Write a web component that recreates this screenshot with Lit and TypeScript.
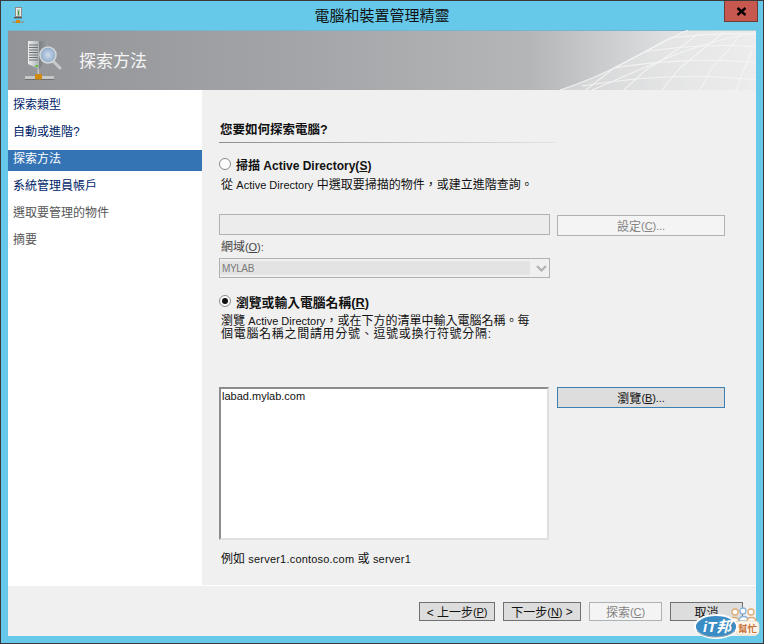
import { LitElement, html, css, svg } from "lit";
import { customElement } from "lit/decorators.js";

const smallIcon = svg`<svg class="tb-icon" width="13" height="17" viewBox="0 0 13 17">
  <rect x="3.500" y="0.500" width="6" height="9" fill="#eef0ee" stroke="#8d8d8d"/>
  <rect x="5" y="2" width="3" height="7" fill="#b9c8b9"/><rect x="6" y="4" width="1" height="4" fill="#35a035"/>
  <rect x="2" y="10" width="8" height="1.400" fill="#55595c"/>
  <rect x="0" y="14.500" width="12" height="1.200" fill="#8d8d84"/><rect x="4" y="13" width="4" height="3" fill="#d08a0c"/>
</svg>`;

const headIcon = svg`<svg class="head-icon" width="38" height="44" viewBox="0 0 38 44">
  <defs>
    <linearGradient id="srv" x1="0" x2="1"><stop offset="0" stop-color="#eceeee"/><stop offset="1" stop-color="#aeb2b4"/></linearGradient>
    <linearGradient id="sd" x1="0" x2="1"><stop offset="0" stop-color="#7d8184"/><stop offset="1" stop-color="#9b9ea1"/></linearGradient>
    <radialGradient id="gl"><stop offset="0" stop-color="#cfdcea"/><stop offset="1" stop-color="#8aa8c8"/></radialGradient>
  </defs>
  <path d="M3 3 L14 3 L14 31 L3 26 Z" fill="url(#srv)"/>
  <path d="M14 3 L23 3 L23 20 L14 31 Z" fill="url(#sd)"/>
  <g stroke="#6c7276" stroke-width="1"><path d="M4 7h9M4 9.500h9M4 12h9M4 14.500h9M4 17h9M4 19.500h9M4 22h9"/></g>
  <rect x="10.500" y="27" width="2.500" height="2" fill="#58c030"/>
  <rect x="12.500" y="31" width="1.600" height="6" fill="#c4c6c8"/>
  <path d="M28 23 L35 30" stroke="#c8cacb" stroke-width="3" stroke-linecap="round"/>
  <circle cx="23" cy="17" r="8" fill="url(#gl)" stroke="#d2d6d8" stroke-width="1.600"/>
  <rect x="0" y="38" width="29" height="3" fill="#c6c8c8"/><rect x="0" y="41" width="29" height="1" fill="#6d6f70"/>
  <rect x="10" y="36" width="7" height="5.500" rx="1" fill="#d08a0c"/>
</svg>`;

const mesh = svg`<svg class="mesh" width="204" height="60" viewBox="0 0 204 60" fill="none">
  <path d="M8 60 C60 44 100 16 136 0 L204 0 L204 60 Z" fill="#ebecec" opacity="0.45"/>
  <g stroke="#f7f7f8" stroke-width="1.100" opacity="0.85">
    <path d="M8 60 C60 44 100 16 136 0"/>
    <path d="M40 60 C90 40 140 12 204 3"/>
    <path d="M30 56 C90 46 150 44 204 50"/>
    <path d="M62 38 C110 30 165 28 204 33"/>
    <path d="M92 22 C130 16 170 14 204 17"/>
    <path d="M118 8 C150 4 180 3 204 4"/>
    <path d="M34 60 L62 38 L92 22 L118 8"/>
    <path d="M72 60 L94 40 L122 22 L146 4"/>
    <path d="M110 60 L128 38 L150 20 L172 2"/>
    <path d="M148 60 L160 38 L178 18 L190 2"/>
    <path d="M184 60 L192 40 L200 20"/>
  </g>
</svg>`;

const badge = svg`<svg class="badge" width="68" height="34" viewBox="0 0 68 34">
  <g fill="#ffffff" stroke-width="1.300">
    <circle cx="42" cy="6" r="3" stroke="#e0ab72"/><circle cx="50" cy="5" r="3" stroke="#8ab4d8"/><circle cx="58" cy="6" r="3" stroke="#e0ab72"/>
    <path d="M37 16 C37 10 46 10 46 16Z" stroke="#e0ab72"/><path d="M46 15 C46 9 55 9 55 15Z" stroke="#8ab4d8"/><path d="M54 16 C54 10 63 10 63 16Z" stroke="#e0ab72"/>
  </g>
  <rect x="43" y="15" width="23" height="14" rx="4" fill="#fdf6ec" stroke="#e8d8c0" stroke-width="0.800"/>
  <ellipse cx="23" cy="20.500" rx="21" ry="11.500" fill="#3a8cc4" stroke="#ffffff" stroke-width="1.800"/>
  <path d="M4 25 C10 33 34 33 42 25" stroke="#9aa4aa" stroke-width="1" fill="none"/>
  <text x="10" y="26" font-family="Liberation Sans, Noto Sans CJK TC, sans-serif" font-size="15" font-weight="700" font-style="italic" fill="#ffffff">iT邦</text>
  <text x="45" y="26" font-family="Noto Sans CJK TC, sans-serif" font-size="9.500" font-weight="700" fill="#c8743a">幫忙</text>
</svg>`;

@customElement("app-root")
export class AppRoot extends LitElement {
  static styles = css`
    :host {
      display: block;
      width: 764px;
      height: 644px;
      font-family: "Liberation Sans", "Noto Sans CJK TC", sans-serif;
      font-size: 12px;
      color: #111;
    }
    * { box-sizing: border-box; }
    u { text-underline-offset: 1px; }
    .lat { font-size: 11px; }
    .key { font-size: 11px; letter-spacing: -0.1px; }
    .window {
      width: 764px;
      height: 644px;
      background: #66c9ea;
      border: 1px solid #3a3a3a;
      display: flex;
      flex-direction: column;
      position: relative;
    }
    .titlebar {
      height: 29px;
      flex: none;
      display: grid;
      grid-template-columns: 1fr auto 1fr;
      padding: 0 5px;
    }
    .tb-icon { margin: 6px 0 0 6px; }
    .title {
      font-size: 15px;
      line-height: 29px;
      color: #111;
    }
    .close {
      justify-self: end;
      width: 34px;
      height: 21px;
      background: #c75850;
      border: 1px solid #6e3a38;
      border-top: none;
      display: flex;
      align-items: center;
      justify-content: center;
    }
    .frame {
      flex: 1;
      margin: 0 7px 7px 7px;
      display: flex;
      flex-direction: column;
      min-height: 0;
    }
    .header {
      height: 60px;
      flex: none;
      position: relative;
      display: flex;
      align-items: center;
      background: linear-gradient(90deg, #929497 0%, #a3a5a8 40%, #b4b6b8 70%, #dedfe0 88%, #eeeeef 100%);
      box-shadow: inset 0 1px 0 #78b4cc;
      padding-left: 17px;
      overflow: hidden;
    }
    .head-icon { flex: none; }
    .head-title {
      margin-left: 16px;
      font-size: 17px;
      color: #f6f6f6;
      position: relative;
      top: -1px;
    }
    .mesh { position: absolute; right: 0; top: 0; }
    .body { flex: 1; display: flex; min-height: 0; }
    .nav {
      width: 194px;
      flex: none;
      background: #fff;
      padding-top: 6px;
      display: flex;
      flex-direction: column;
    }
    .nav-item {
      height: 21px;
      margin-bottom: 6px;
      line-height: 19px;
      padding-left: 5px;
      color: #002468;
      font-size: 12px;
    }
    .nav-item.on { background: #3574b4; color: #fff; }
    .nav-item.off { color: #565656; }
    .panel {
      flex: 1;
      background: #f0f0f0;
      padding: 30px 0 0 17px;
      display: flex;
      flex-direction: column;
      align-items: flex-start;
    }
    .heading {
      margin-left: 1px;
      height: 20px;
      line-height: 20px;
      font-weight: 700;
      font-size: 12.5px;
    }
    .rule {
      width: 337px;
      height: 1px;
      margin-top: 2px;
      background: linear-gradient(90deg, #8f8f8f 0%, #b5b5b5 50%, #e4e4e4 100%);
    }
    .radio-row {
      height: 20px;
      display: flex;
      align-items: center;
      font-weight: 700;
    }
    .radio-row.first { margin-top: 11px; }
    .radio-row.second { margin-top: 13px; font-size: 12.8px; }
    .radio {
      width: 12px;
      height: 12px;
      border-radius: 50%;
      border: 1px solid #8a8a8a;
      background: #fdfdfd;
      margin-right: 5px;
      display: flex;
      align-items: center;
      justify-content: center;
      flex: none;
    }
    .radio i { width: 6px; height: 6px; border-radius: 50%; background: #111; display: block; }
    .desc { margin: 3px 0 0 2px; height: 16px; line-height: 16px; }
    .desc.two { margin-top: 4px; height: 26px; line-height: 13px; width: 340px; }
    .wide { letter-spacing: 0.7px; }
    .row {
      display: grid;
      grid-template-columns: 331px 168px;
      column-gap: 7px;
      align-items: start;
    }
    .row.top { margin-top: 21px; }
    .row.list { margin-top: 46px; grid-template-columns: 330px 168px; column-gap: 8px; }
    .field {
      height: 21px;
      border: 1px solid #adb2b5;
      background: #ececec;
    }
    .btn {
      height: 21px;
      border: 1px solid #707070;
      background: #dddddd;
      display: flex;
      align-items: center;
      justify-content: center;
      white-space: pre;
      color: #111;
      font-size: 12px;
    }
    .btn.dis { border-color: #adb2b5; background: #f4f4f4; color: #838383; }
    .btn.def { border-color: #3c7fb1; }
    .set { margin-top: 1px; }
    .label { margin: 3px 0 0 2px; height: 16px; line-height: 16px; color: #444; }
    .select {
      margin-top: 3px;
      width: 331px;
      height: 20px;
      border: 1px solid #adb2b5;
      background: #f0f0f0;
      display: flex;
      align-items: center;
      color: #7a7a7a;
      padding: 2px 0;
    }
    .select .val {
      width: 310px;
      height: 100%;
      background: #e3e3e3;
      padding-left: 2px;
      line-height: 15px;
      font-size: 10px;
      letter-spacing: -0.4px;
    }
    .select svg { margin-left: 6px; }
    .listbox {
      height: 153px;
      background: #fff;
      border-top: 2px solid #8d8d8d;
      border-left: 2px solid #8d8d8d;
      border-right: 2px solid #dfdfdf;
      border-bottom: 2px solid #dfdfdf;
      padding: 0 0 0 1px;
      line-height: 15px;
      font-size: 11px;
      color: #111;
    }
    .example { margin: 11px 0 0 2px; height: 16px; line-height: 16px; }
    .example .lat { letter-spacing: 0.2px; }
    .footer {
      height: 51px;
      flex: none;
      background: #f0f0f0;
      border-top: 1px solid #fff;
      padding: 16px 13px 0 0;
      display: flex;
      justify-content: flex-end;
      gap: 8px;
    }
    .footer .btn { height: 19px; }
    .w76 { width: 76px; }
    .w78 { width: 78px; }
    .w73 { width: 73px; }
    .badge { position: absolute; right: 2px; bottom: 3px; }
  `;

  render() {
    return html`
      <div class="window">
        <div class="titlebar">
          <div>${smallIcon}</div>
          <div class="title">電腦和裝置管理精靈</div>
          <div class="close">
            <svg width="11" height="9" viewBox="0 0 11 9"><path d="M1.500 1 L9.500 8 M9.500 1 L1.500 8" stroke="#000" stroke-width="2.400"/></svg>
          </div>
        </div>
        <div class="frame">
          <div class="header">
            ${headIcon}
            <div class="head-title">探索方法</div>
            ${mesh}
          </div>
          <div class="body">
            <div class="nav">
              <div class="nav-item">探索類型</div>
              <div class="nav-item">自動或進階?</div>
              <div class="nav-item on">探索方法</div>
              <div class="nav-item">系統管理員帳戶</div>
              <div class="nav-item off">選取要管理的物件</div>
              <div class="nav-item off">摘要</div>
            </div>
            <div class="panel">
              <div class="heading">您要如何探索電腦?</div>
              <div class="rule"></div>
              <div class="radio-row first"><span class="radio"></span><span>掃描 Active Directory(<u>S</u>)</span></div>
              <div class="desc">從 <span class="lat">Active Directory</span> 中選取要掃描的物件，或建立進階查詢。</div>
              <div class="row top">
                <div class="field"></div>
                <div class="btn dis set">設定<span class="key">(<u>C</u>)...</span></div>
              </div>
              <div class="label">網域<span class="key">(<u>O</u>):</span></div>
              <div class="select">
                <div class="val">MYLAB</div>
                <svg width="11" height="7" viewBox="0 0 11 7" fill="none"><path d="M1 1 L5.500 5.500 L10 1" stroke="#b0b0b0" stroke-width="2"/></svg>
              </div>
              <div class="radio-row second"><span class="radio"><i></i></span><span>瀏覽或輸入電腦名稱(<u>R</u>)</span></div>
              <div class="desc two">瀏覽 <span class="lat">Active Directory</span>，或在下方的清單中輸入電腦名稱。每<br /><span class="wide">個電腦名稱之間請用分號、逗號或換行符號分隔:</span></div>
              <div class="row list">
                <div class="listbox">labad.mylab.com</div>
                <div class="btn def">瀏覽<span class="key">(<u>B</u>)...</span></div>
              </div>
              <div class="example">例如 <span class="lat">server1.contoso.com</span> 或 <span class="lat">server1</span></div>
            </div>
          </div>
          <div class="footer">
            <div class="btn w76">&lt; 上一步<span class="key">(<u>P</u>)</span></div>
            <div class="btn w78">下一步<span class="key">(<u>N</u>)</span> &gt;</div>
            <div class="btn dis w73">探索<span class="key">(<u>C</u>)</span></div>
            <div class="btn w73">取消</div>
          </div>
        </div>
        ${badge}
      </div>
    `;
  }
}
